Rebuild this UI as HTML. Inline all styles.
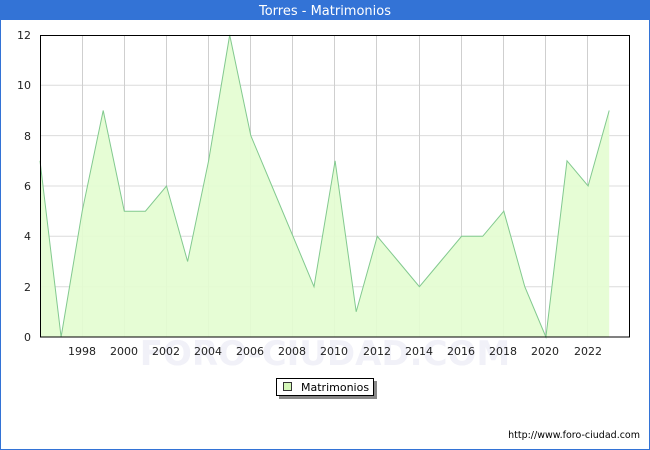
<!DOCTYPE html>
<html><head><meta charset="utf-8"><style>
html,body{margin:0;padding:0;width:650px;height:450px;overflow:hidden;background:#fff;font-family:"DejaVu Sans","Liberation Sans",sans-serif;}
</style></head><body>
<svg width="650" height="450" xmlns="http://www.w3.org/2000/svg" font-family="DejaVu Sans, Liberation Sans, sans-serif">
<rect x="0.5" y="0.5" width="649" height="449" fill="#fff" stroke="#3373d6"/>
<rect x="0" y="0" width="650" height="20" fill="#3373d6"/>
<text x="325" y="15" fill="#fff" font-size="13" text-anchor="middle">Torres - Matrimonios</text>
<text x="325" y="365" fill="#f1f1f8" font-size="34" text-anchor="middle" font-weight="bold">FORO-CIUDAD.COM</text>
<g stroke="#dcdcdc" stroke-width="1">
<line x1="40" y1="85.3" x2="630" y2="85.3"/><line x1="40" y1="135.6" x2="630" y2="135.6"/><line x1="40" y1="186" x2="630" y2="186"/><line x1="40" y1="236.3" x2="630" y2="236.3"/><line x1="40" y1="286.7" x2="630" y2="286.7"/>
</g>
<g stroke="#cfcfcf" stroke-width="1">
<line x1="82.5" y1="35" x2="82.5" y2="337"/><line x1="124.5" y1="35" x2="124.5" y2="337"/><line x1="166.5" y1="35" x2="166.5" y2="337"/><line x1="208.5" y1="35" x2="208.5" y2="337"/><line x1="250.5" y1="35" x2="250.5" y2="337"/><line x1="292.5" y1="35" x2="292.5" y2="337"/><line x1="334.5" y1="35" x2="334.5" y2="337"/><line x1="376.5" y1="35" x2="376.5" y2="337"/><line x1="419.5" y1="35" x2="419.5" y2="337"/><line x1="461.5" y1="35" x2="461.5" y2="337"/><line x1="503.5" y1="35" x2="503.5" y2="337"/><line x1="545.5" y1="35" x2="545.5" y2="337"/><line x1="587.5" y1="35" x2="587.5" y2="337"/>
</g>
<polygon fill="#e3fdd0" fill-opacity="0.9" stroke="none" points="40,337 40,160.8 61.1,337 82.2,211.2 103.2,110.5 124.3,211.2 145.4,211.2 166.5,186 187.6,261.5 208.6,160.8 229.7,35 250.8,135.6 271.9,186 293,236.3 314,286.7 335.1,160.8 356.2,311.8 377.3,236.3 398.4,261.5 419.4,286.7 440.5,261.5 461.6,236.3 482.7,236.3 503.8,211.2 524.8,286.7 545.9,337 567,160.8 588.1,186 609.2,110.5 609.2,337"/>
<polyline fill="none" stroke="#82c98f" stroke-width="1" points="40,160.8 61.1,337 82.2,211.2 103.2,110.5 124.3,211.2 145.4,211.2 166.5,186 187.6,261.5 208.6,160.8 229.7,35 250.8,135.6 271.9,186 293,236.3 314,286.7 335.1,160.8 356.2,311.8 377.3,236.3 398.4,261.5 419.4,286.7 440.5,261.5 461.6,236.3 482.7,236.3 503.8,211.2 524.8,286.7 545.9,337 567,160.8 588.1,186 609.2,110.5"/>
<rect x="40.5" y="35.5" width="589" height="301.5" fill="none" stroke="#000"/>
<g font-size="11" fill="#222" text-anchor="end">
<text x="31" y="39">12</text><text x="31" y="89">10</text><text x="31" y="140">8</text><text x="31" y="190">6</text><text x="31" y="240">4</text><text x="31" y="291">2</text><text x="31" y="341">0</text>
</g>
<g font-size="11" fill="#222" text-anchor="middle">
<text x="82" y="355">1998</text><text x="124" y="355">2000</text><text x="166" y="355">2002</text><text x="208" y="355">2004</text><text x="250" y="355">2006</text><text x="292" y="355">2008</text><text x="334" y="355">2010</text><text x="377" y="355">2012</text><text x="419" y="355">2014</text><text x="461" y="355">2016</text><text x="503" y="355">2018</text><text x="545" y="355">2020</text><text x="588" y="355">2022</text>
</g>
<rect x="279" y="381" width="98" height="18" fill="#888"/>
<rect x="276.5" y="378.5" width="97" height="17" fill="#fff" stroke="#000"/>
<rect x="283.5" y="382.5" width="8" height="8" fill="#d4f7b8" stroke="#333"/>
<text x="301" y="391" font-size="11" fill="#000">Matrimonios</text>
<text x="640" y="438" font-size="9.5" fill="#000" text-anchor="end">http://www.foro-ciudad.com</text>
</svg>
</body></html>
